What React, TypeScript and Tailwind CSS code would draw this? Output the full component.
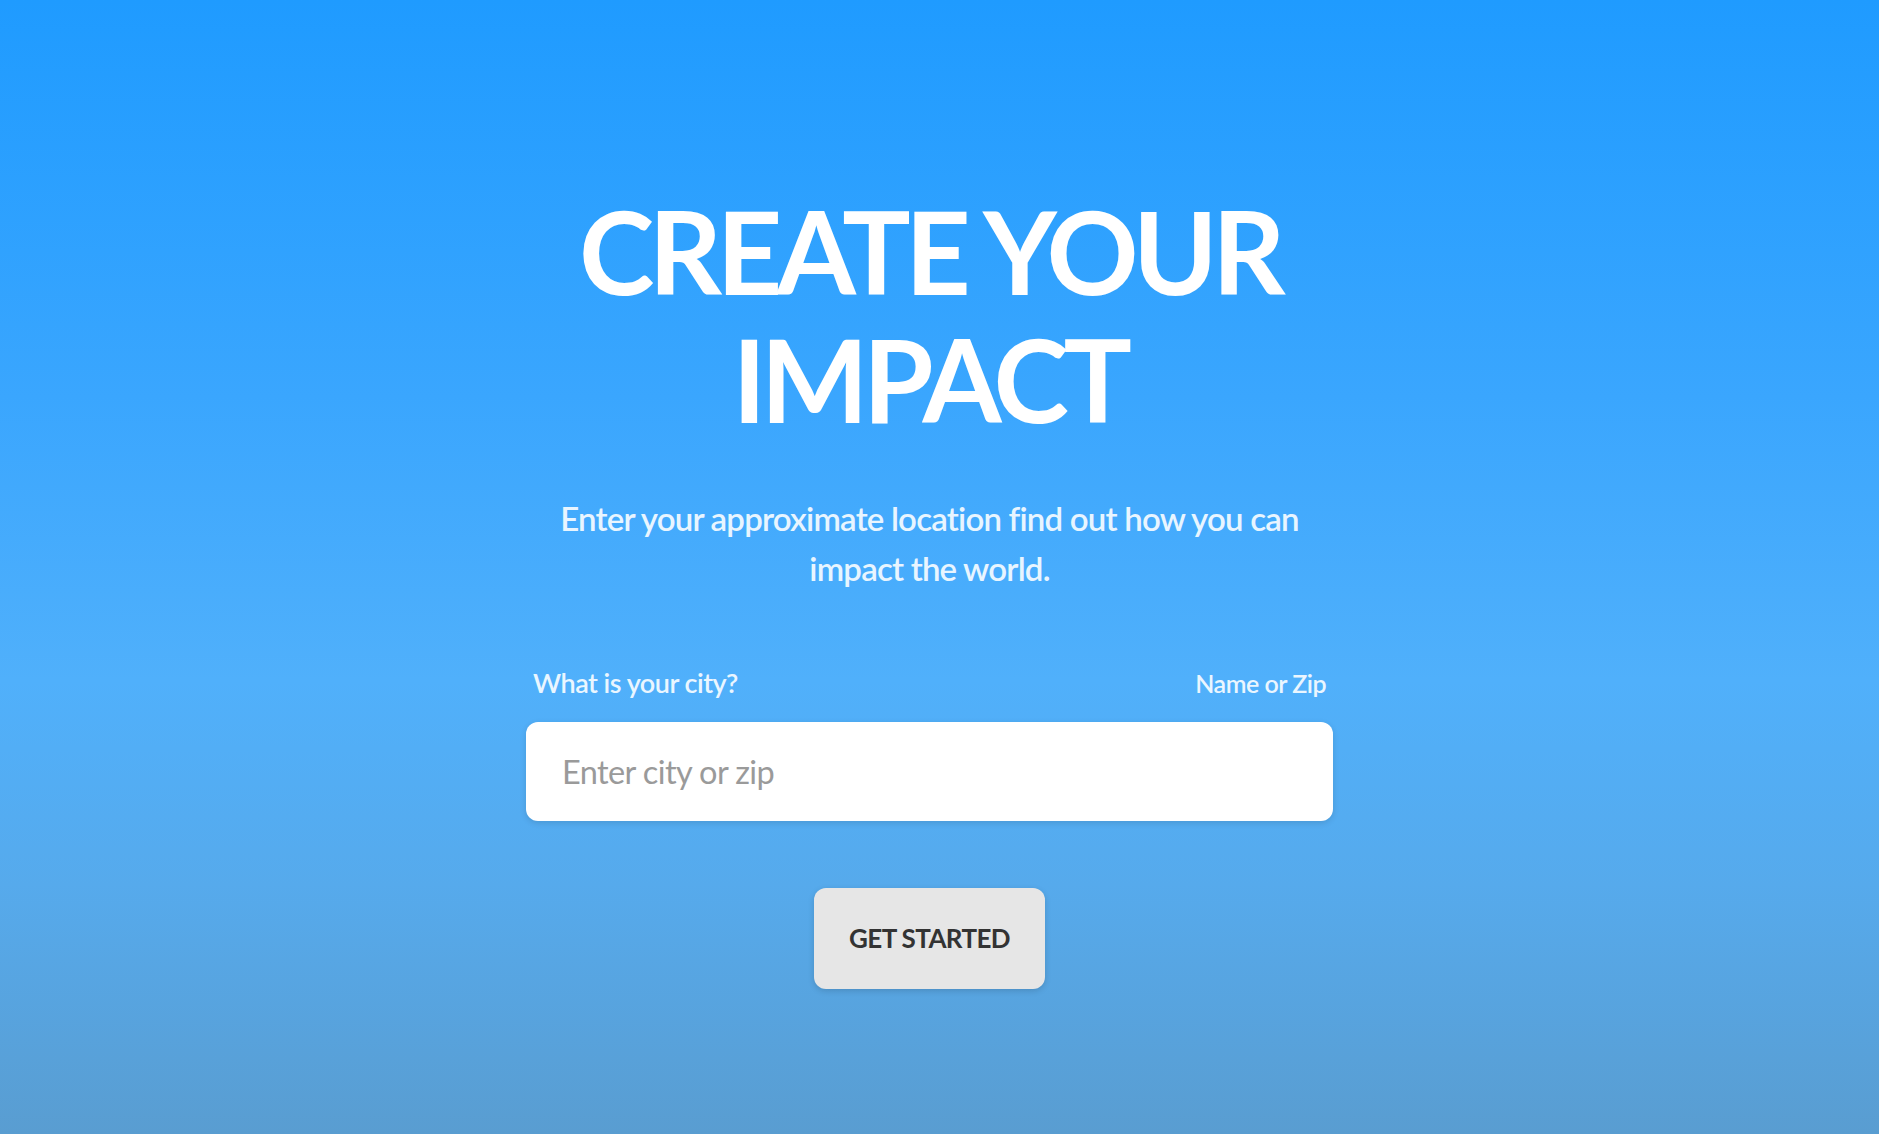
import * as React from 'react'

const font = { fontFamily: 'Lato, "Noto Sans", sans-serif' }

export default function App() {
  return (
    <div
      className="min-h-[1134px] w-full bg-[linear-gradient(to_bottom,#1f9bff_0%,#3aa6fe_35%,#50b0fb_60%,#56aaec_78%,#599dd1_100%)]"
      style={font}
    >
      <div className="flex flex-col items-center pt-[187px] pr-[20px]">
        <h1 className="text-center text-[114px] leading-[128px] font-bold tracking-[-5.5px] text-white">
          CREATE YOUR
          <br />
          IMPACT
        </h1>
        <p className="mt-[50px] w-[790px] text-center text-[33px] leading-[50px] font-semibold tracking-[-0.8px] text-[#e8f5ff]">
          Enter your approximate location find out how you can impact the world.
        </p>

        <div className="mt-[75px] w-[807px]">
          <div className="flex h-[30px] items-center justify-between px-[7px] leading-[30px] font-semibold text-[#eaf6ff]">
            <span className="text-[27px] tracking-[-0.5px]">What is your city?</span>
            <span className="text-[25px] tracking-[-0.5px]">Name or Zip</span>
          </div>
          <input
            className="mt-[24px] h-[99px] w-full rounded-[12px] bg-white px-[36px] text-[32.5px] tracking-[-0.6px] text-[#555] shadow-[0_2px_6px_rgba(0,0,0,0.12)] outline-none placeholder:text-[#9a9a9a]"
            placeholder="Enter city or zip"
          />
        </div>

        <button className="mt-[67px] h-[101px] w-[231px] rounded-[12px] bg-[#e6e6e6] text-[26px] font-bold tracking-[-0.6px] text-[#333] shadow-[0_2px_6px_rgba(0,0,0,0.15)]">
          GET STARTED
        </button>
      </div>
    </div>
  )
}
